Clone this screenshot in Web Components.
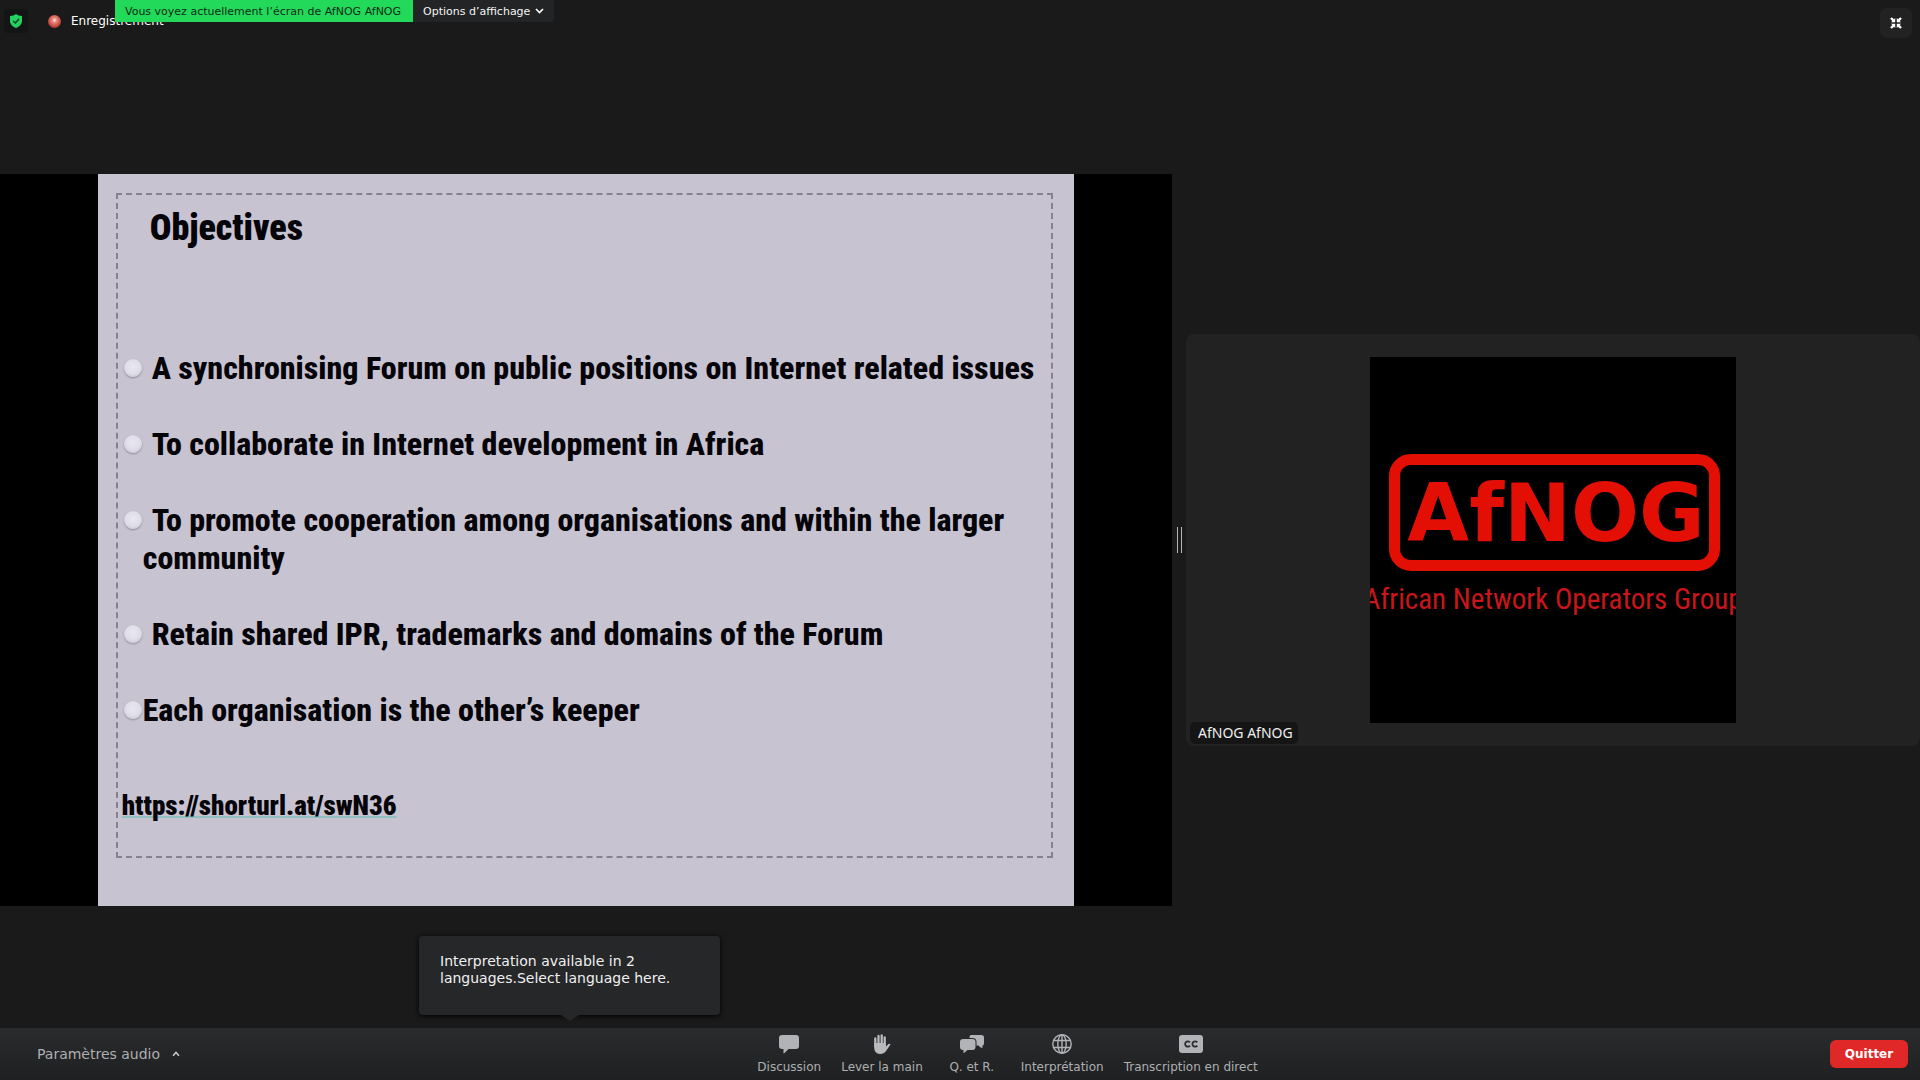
<!DOCTYPE html>
<html lang="fr">
<head>
<meta charset="utf-8">
<title>Webinaire AfNOG</title>
<style>
  html, body { margin: 0; height: 100%; background: #1a1a1a; }
  body { font-family: "DejaVu Sans", Verdana, sans-serif; color: #fff; }
</style>
</head>
<body>
<meeting-app></meeting-app>
<script>
  const define = (name, html) => {
    const tpl = document.createElement('template');
    tpl.innerHTML = html;
    customElements.define(name, class extends HTMLElement {
      constructor() {
        super();
        this.attachShadow({ mode: 'open' }).appendChild(tpl.content.cloneNode(true));
      }
    });
  };

  /* Top bar: security badge, recording state, share banner, full-screen exit */
  define('meeting-header', `
    <style>
      :host { position: relative; display: flex; align-items: flex-start; justify-content: space-between;
              height: 52px; box-sizing: border-box; padding: 8px 8px 0 4px; font-size: 12px; }
      button { border: 0; padding: 0; font: inherit; color: inherit; cursor: pointer; }
      .status { display: flex; align-items: center; gap: 20px; }
      .shield { display: flex; align-items: center; justify-content: center; width: 24px; height: 24px;
                border-radius: 4px; background: #131414; }
      .rec { display: flex; align-items: center; gap: 10px; line-height: 26px; }
      .rec i { width: 13px; height: 13px; border-radius: 50%;
               background: radial-gradient(circle at 50% 40%, #fff0ec 0, #e98a7f 22%, #c6483e 60%, #8c2c27 100%); }
      .exit { display: flex; align-items: center; justify-content: center; width: 32px; height: 30px;
              border-radius: 7px; background: #222; }
      .banner { position: absolute; top: 0; left: 115px; display: flex; height: 22px; font-size: 11px; line-height: 23px; white-space: nowrap; }
      .banner p { margin: 0; padding: 0 12px 0 10px; background: #23d95a; color: #102c18; }
      .banner button { display: flex; align-items: center; gap: 5px; padding: 0 10px; background: #222426; color: #f4f4f4;
                       border-radius: 0 0 4px 0; }
    </style>
    <div class="status">
      <button class="shield" aria-label="Sécurité">
        <svg width="12" height="14" viewBox="0 0 12 14"><path d="M6 0C4.500 1.300 2.500 1.900 0 2V7C0 10.300 2.600 12.600 6 14 9.400 12.600 12 10.300 12 7V2C9.500 1.900 7.500 1.300 6 0Z" fill="#23d160"/><path d="M3.200 7 5.300 9 9 5" fill="none" stroke="#173a22" stroke-width="1.500"/></svg>
      </button>
      <span class="rec"><i></i>Enregistrement</span>
    </div>
    <div class="banner">
      <p>Vous voyez actuellement l’écran de AfNOG AfNOG</p>
      <button>Options d’affichage
        <svg width="9" height="6" viewBox="0 0 9 6"><path d="M1 1 4.500 4.500 8 1" fill="none" stroke="#fff" stroke-width="1.700"/></svg>
      </button>
    </div>
    <button class="exit" aria-label="Quitter le plein écran">
      <svg width="12" height="12" viewBox="0 0 12 12" fill="#fff" stroke="#fff" stroke-width="2.400">
        <path d="M1 1 3.500 3.500M11 1 8.500 3.500M1 11 3.500 8.500M11 11 8.500 8.500" fill="none"/>
        <path d="M5.200 1V5.200H1ZM6.800 1V5.200H11ZM5.200 11V6.800H1ZM6.800 11V6.800H11Z" stroke="none"/>
      </svg>
    </button>`);

  define('slide-bullet', `
    <style>
      :host { display: flex; align-items: flex-start; gap: 1px; line-height: 38px; }
      i { flex: none; width: 18px; height: 18px; margin: 10px 0; border-radius: 50%;
          background: radial-gradient(circle at 50% 42%, #e9e8f2 0, #dfdee9 50%, #cac8d5 85%, #b9b6c5 100%);
          box-shadow: 0 1px 2px #8d8a9b; }
      p { margin: 0; text-indent: 9px; }
      :host([flush]) p { text-indent: 0; }
    </style>
    <i></i><p><slot></slot></p>`);

  define('shared-slide', `
    <style>
      :host { display: flex; justify-content: center; aspect-ratio: 8 / 5; background: #000; }
      article { display: flex; height: 100%; aspect-ratio: 4 / 3; box-sizing: border-box;
                padding: 19px 21px 48px 18px; background: #c7c3d1; color: #050409;
                font: 800 32px "Roboto Condensed", "Liberation Sans Narrow", sans-serif; }
      .frame { flex: 1; display: flex; flex-direction: column; align-items: flex-start; box-sizing: border-box;
               border: 2px dashed #85818f; padding: 10px 6px; }
      h1 { margin: 0 0 98px 26px; font-size: 36px; font-weight: 900; line-height: 46px; }
      .list { display: flex; flex-direction: column; gap: 38px; }
      a { margin-top: 59px; margin-left: -2px; font-size: 27px; font-weight: 900; line-height: 36px; color: inherit;
          text-decoration: underline #8fc0c4 2px; text-underline-offset: 1px; text-decoration-skip-ink: none; }
    </style>
    <article>
      <div class="frame">
        <h1>Objectives</h1>
        <div class="list">
          <slide-bullet>A synchronising Forum on public positions on Internet related issues</slide-bullet>
          <slide-bullet>To collaborate in Internet development in Africa</slide-bullet>
          <slide-bullet>To promote cooperation among organisations and within the larger community</slide-bullet>
          <slide-bullet>Retain shared IPR, trademarks and domains of the Forum</slide-bullet>
          <slide-bullet flush>Each organisation is the other’s keeper</slide-bullet>
        </div>
        <a href="https://shorturl.at/swN36">https://shorturl.at/swN36</a>
      </div>
    </article>`);

  define('participant-tile', `
    <style>
      :host { position: relative; display: flex; align-items: center; justify-content: center; aspect-ratio: 16 / 9;
              border-radius: 8px; background: #222; }
      .picture { display: flex; flex-direction: column; align-items: center; width: 366px; height: 366px; box-sizing: border-box;
                 padding-top: 97px; overflow: hidden; background: #000; color: #e30f05; white-space: nowrap; }
      .logo { width: 331px; height: 117px; box-sizing: border-box; border: 11px solid #e30f05; border-radius: 22px;
              margin-left: 2px; padding-left: 4px; text-align: center; font: bold 80px/97px "DejaVu Sans", sans-serif; }
      .tag { margin-top: 8px; color: #c8161a; font: 29px/40px "Roboto Condensed", sans-serif; }
      .name { position: absolute; left: 4px; bottom: 2px; padding: 0 5px 0 8px; border-radius: 5px; background: #151515;
              font: 14px/22px "Noto Sans", sans-serif; color: #eee; }
    </style>
    <div class="picture">
      <div class="logo">AfNOG</div>
      <div class="tag">African Network Operators Group</div>
    </div>
    <span class="name"><slot></slot></span>`);

  define('pane-divider', `
    <style>
      :host { display: flex; justify-content: center; align-items: center; gap: 3px; width: 14px; flex: none; }
      i { width: 1px; height: 26px; background: #b5b5b5; }
    </style><i></i><i></i>`);

  define('tool-item', `
    <style>
      :host { display: block; }
      button { display: flex; flex-direction: column; align-items: center; gap: 5px; min-width: 78px; padding: 0 10px; border: 0;
               background: none; color: #adafb1; font: inherit; font-size: 12px; line-height: 16px; white-space: nowrap; cursor: pointer; }
      ::slotted(svg) { display: block; height: 20px; }
    </style>
    <button><slot name="icon"></slot><span><slot></slot></span></button>`);

  define('info-tip', `
    <style>
      :host { position: absolute; left: 419px; bottom: 65px; width: 301px; box-sizing: border-box; padding: 17px 21px 28px;
              border-radius: 4px; background: #252729; color: #f0f0f0; font-size: 14px; line-height: 17px;
              box-shadow: 0 1px 5px #000; }
      :host::after { content: ""; position: absolute; left: 50%; top: 100%; margin-left: -9px;
                     border: 9px solid transparent; border-bottom-width: 0; border-top: 6px solid #252729; }
    </style><slot></slot>`);

  define('meeting-toolbar', `
    <style>
      :host { position: relative; display: flex; align-items: center; justify-content: space-between; flex: none; height: 52px;
              box-sizing: border-box; padding: 0 12px 0 37px; background: linear-gradient(#292b2d, #1f2022); }
      button { border: 0; font: inherit; cursor: pointer; }
      .audio { display: flex; align-items: center; gap: 12px; padding: 0 5px 0 0; background: none; color: #adafb1; font-size: 14px; }
      .tools { display: flex; }
      .leave { width: 78px; height: 28px; border-radius: 6px; background: #e02828; color: #fff; font-weight: bold; font-size: 12px; padding: 0; }
    </style>
    <button class="audio">Paramètres audio
      <svg width="8" height="6" viewBox="0 0 8 6"><path d="M1 4.800 4 1.500 7 4.800" fill="none" stroke="#c4c6c8" stroke-width="1.600"/></svg>
    </button>
    <div class="tools">
      <tool-item><svg slot="icon" width="20" height="20" viewBox="0 0 20 20" fill="#b2b3b6"><path d="M3 1H17Q20 1 20 4V12Q20 15 17 15H9.500L5 19.500Q4.500 19.500 4.500 19V15H3Q0 15 0 12V4Q0 1 3 1Z"/></svg>Discussion</tool-item>
      <tool-item><svg slot="icon" width="18" height="20" viewBox="0 0 18 20"><path d="M2.300 12V4.500M5.500 10V2M8.700 10V1.500M11.700 11V3.500" fill="none" stroke="#b9babd" stroke-width="2.300" stroke-linecap="round"/><path d="M1.150 9H12.850V12.500L15.500 10Q17 9.500 17.500 10.500L13 17Q11 20 7 20 1.150 20 1.150 13Z" fill="#b9babd"/></svg>Lever la main</tool-item>
      <tool-item><svg slot="icon" width="24" height="20" viewBox="0 0 24 20" fill="#b2b3b6"><path d="M11 1H21.500Q24 1 24 3.500V9Q24 11.500 22.500 11.500V14Q20 13.500 18.500 11.500H16.500V8Q16.500 4 12.500 4H9.500Q9.500 1 11 1Z"/><path d="M3 5H12.500Q15.500 5 15.500 8V13Q15.500 16 12.500 16H7.500L4 19Q3.500 19 3.500 18.500V16H3Q0 16 0 13V8Q0 5 3 5Z"/></svg>Q. et R.</tool-item>
      <tool-item><svg slot="icon" width="20" height="20" viewBox="0 0 20 20" fill="none" stroke="#b2b3b6" stroke-width="1.400"><circle cx="10" cy="10" r="9.200"/><ellipse cx="10" cy="10" rx="4.200" ry="9.200"/><path d="M10 1V19M1.500 6.500H18.500M1.500 13.500H18.500"/></svg>Interprétation</tool-item>
      <tool-item><svg slot="icon" width="24" height="20" viewBox="0 0 24 20"><rect y="1" width="24" height="18" rx="3" fill="#b2b3b6"/><g fill="none" stroke="#2c2e30" stroke-width="1.800"><path d="M11 8.400A2.700 2.700 0 1 0 11 11.600M18.300 8.400A2.700 2.700 0 1 0 18.300 11.600"/></g></svg>Transcription en direct</tool-item>
    </div>
    <button class="leave">Quitter</button>
    <info-tip>Interpretation available in 2 languages.Select language here.</info-tip>`);

  define('meeting-app', `
    <style>
      :host { display: flex; flex-direction: column; min-height: 100vh; background: #1a1a1a; }
      main { flex: 1; display: flex; align-items: center; }
      shared-slide { flex: 1172; min-width: 0; }
      participant-tile { flex: 734; min-width: 0; }
    </style>
    <meeting-header></meeting-header>
    <main>
      <shared-slide></shared-slide>
      <pane-divider></pane-divider>
      <participant-tile>AfNOG AfNOG</participant-tile>
    </main>
    <meeting-toolbar></meeting-toolbar>`);
</script>
</body>
</html>
